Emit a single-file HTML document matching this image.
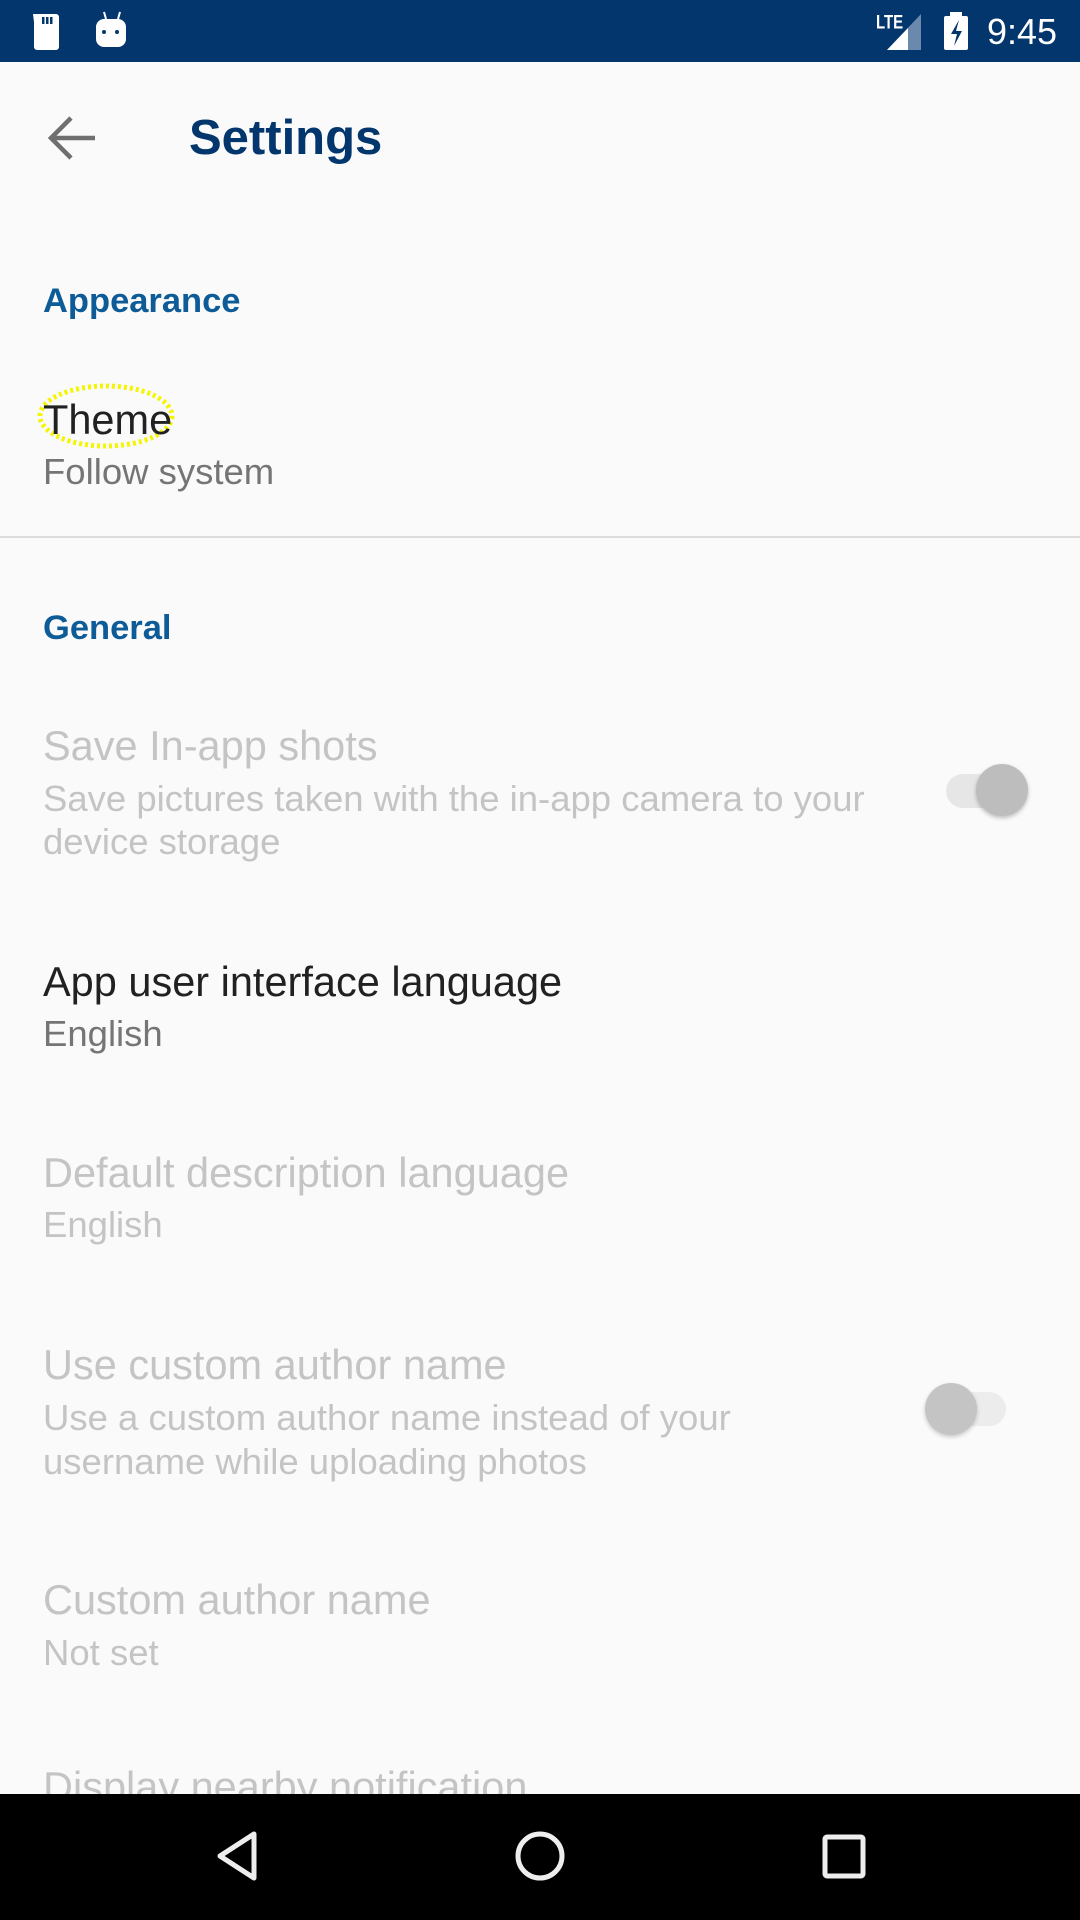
<!DOCTYPE html>
<html><head><meta charset="utf-8"><style>
*{margin:0;padding:0;box-sizing:border-box}
body{width:1080px;height:1920px;background:#fafafa;position:relative;overflow:hidden;font-family:"Liberation Sans",sans-serif}
.a{position:absolute;white-space:nowrap}
.t{font-size:41.5px;color:#212121;left:43px;line-height:50px}
.s{font-size:36.5px;color:#757575;left:43px;line-height:44px}
.d{color:#c4c4c4}
.h{font-size:34.5px;font-weight:bold;color:#0d5c97;left:43px;line-height:40px}
</style></head><body>
<div class="a" style="left:0;top:0;width:1080px;height:62px;background:#03366c"></div>
<svg class="a" style="left:0;top:0" width="1080" height="62">
<path d="M33 14h23a3 3 0 0 1 3 3v30a3 3 0 0 1-3 3H37a3 3 0 0 1-3-3V22z" fill="#fff"/>
<rect x="42" y="17" width="2.5" height="7" fill="#03366c"/><rect x="46" y="17" width="2.5" height="7" fill="#03366c"/><rect x="50" y="17" width="2.5" height="7" fill="#03366c"/>
<path d="M104 12l2 7M120 12l-2 7" stroke="#fff" stroke-width="2"/>
<rect x="96" y="19" width="30" height="28" rx="8" fill="#fff"/>
<circle cx="104" cy="32" r="2" fill="#03366c"/><circle cx="117" cy="32" r="2" fill="#03366c"/>
<text x="876" y="29" font-family="Liberation Sans" font-weight="bold" font-size="15" fill="#fff" transform="scale(1 1.3) translate(0 -7)">LTE</text>
<path d="M887 50L921 14V50z" fill="#6a89ad"/><path d="M887 50L908 28V50z" fill="#fff"/>
<rect x="944" y="16" width="24" height="34" rx="2" fill="#fff"/><rect x="950" y="12" width="12" height="5" fill="#fff"/>
<path d="M959 20l-8 14h6l-3 12 8-15h-6z" fill="#03366c"/>
<text x="987" y="44" font-family="Liberation Sans" font-size="36" fill="#fff">9:45</text>
</svg>
<svg class="a" style="top:116px;left:47px" width="52" height="44"><path d="M4 22H48M24 2L4 22 24 42" stroke="#6f6f6f" stroke-width="4.5" fill="none"/></svg>
<div class="a" style="left:189px;top:110px;font-size:49px;font-weight:bold;color:#03366c;line-height:56px">Settings</div>

<div class="a h" style="top:281px">Appearance</div>
<svg class="a" style="left:36px;top:383px" width="140" height="66"><ellipse cx="70" cy="33" rx="66" ry="30" fill="none" stroke="#f5f500" stroke-width="5" stroke-dasharray="3 3"/></svg>
<div class="a t" style="top:395px">Theme</div>
<div class="a s" style="top:450px">Follow system</div>
<div class="a" style="left:0;top:536px;width:1080px;height:2px;background:#dcdcdc"></div>

<div class="a h" style="top:608px">General</div>
<div class="a t d" style="top:721px">Save In-app shots</div>
<div class="a s d" style="top:777px">Save pictures taken with the in-app camera to your</div>
<div class="a s d" style="top:820px">device storage</div>
<div class="a" style="left:946px;top:774px;width:74px;height:34px;border-radius:17px;background:#e6e6e6"></div>
<div class="a" style="left:976px;top:764px;width:52px;height:52px;border-radius:50%;background:#bdbdbd;box-shadow:0 2px 4px rgba(0,0,0,.25)"></div>

<div class="a t" style="top:957px">App user interface language</div>
<div class="a s" style="top:1012px">English</div>

<div class="a t d" style="top:1148px">Default description language</div>
<div class="a s d" style="top:1203px">English</div>

<div class="a t d" style="top:1340px">Use custom author name</div>
<div class="a s d" style="top:1396px">Use a custom author name instead of your</div>
<div class="a s d" style="top:1440px">username while uploading photos</div>
<div class="a" style="left:930px;top:1392px;width:76px;height:34px;border-radius:17px;background:#ececec"></div>
<div class="a" style="left:925px;top:1383px;width:52px;height:52px;border-radius:50%;background:#c4c4c4;box-shadow:0 2px 4px rgba(0,0,0,.2)"></div>

<div class="a t d" style="top:1575px">Custom author name</div>
<div class="a s d" style="top:1631px">Not set</div>
<div class="a t d" style="top:1762px">Display nearby notification</div>

<div class="a" style="left:0;top:1794px;width:1080px;height:126px;background:#000"></div>
<svg class="a" style="left:0;top:1794px" width="1080" height="126">
<path d="M254 40L220 62 254 84z" stroke="#eee" stroke-width="5" fill="none" stroke-linejoin="round"/>
<circle cx="540" cy="62" r="22" stroke="#eee" stroke-width="5" fill="none"/>
<rect x="825" y="43" width="38" height="39" rx="2" stroke="#eee" stroke-width="5" fill="none"/>
</svg>
</body></html>
